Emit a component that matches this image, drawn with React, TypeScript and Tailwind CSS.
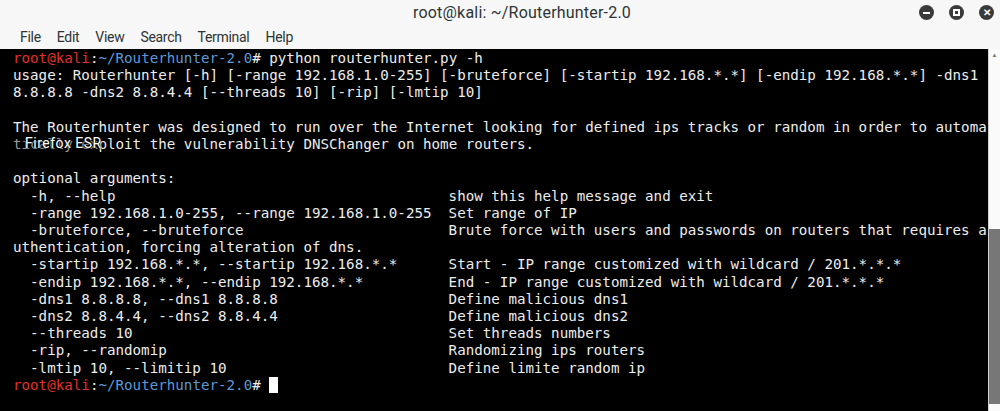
import React from 'react'

const col = (s: string, d: string) => '  ' + s.padEnd(49) + d

const lines: string[] = [
  'usage: Routerhunter [-h] [-range 192.168.1.0-255] [-bruteforce] [-startip 192.168.*.*] [-endip 192.168.*.*] -dns1',
  '8.8.8.8 -dns2 8.8.4.4 [--threads 10] [-rip] [-lmtip 10]',
  '',
  'The Routerhunter was designed to run over the Internet looking for defined ips tracks or random in order to automa',
  'TOOLTIP',
  '',
  'optional arguments:',
  col('-h, --help', 'show this help message and exit'),
  col('-range 192.168.1.0-255, --range 192.168.1.0-255', 'Set range of IP'),
  col('-bruteforce, --bruteforce', 'Brute force with users and passwords on routers that requires a'),
  'uthentication, forcing alteration of dns.',
  col('-startip 192.168.*.*, --startip 192.168.*.*', 'Start - IP range customized with wildcard / 201.*.*.*'),
  col('-endip 192.168.*.*, --endip 192.168.*.*', 'End - IP range customized with wildcard / 201.*.*.*'),
  col('-dns1 8.8.8.8, --dns1 8.8.8.8', 'Define malicious dns1'),
  col('-dns2 8.8.4.4, --dns2 8.8.4.4', 'Define malicious dns2'),
  col('--threads 10', 'Set threads numbers'),
  col('-rip, --randomip', 'Randomizing ips routers'),
  col('-lmtip 10, --limitip 10', 'Define limite random ip'),
]

const Prompt = () => (
  <>
    <span className="text-[#e0302c]">root@kali</span>
    <span>:</span>
    <span className="text-[#5b9ad8]">~/Routerhunter-2.0</span>
    <span>#</span>
  </>
)

const WinButton = ({ children }: { children: React.ReactNode }) => (
  <div className="flex h-[15px] w-[15px] items-center justify-center rounded-full bg-[#3a3a3a]">
    {children}
  </div>
)

export default function App() {
  return (
    <div className="flex h-[411px] w-[1000px] flex-col overflow-hidden bg-white font-['Roboto',sans-serif]">
      {/* Title bar */}
      <div className="relative flex h-[25px] items-center justify-center bg-[#f7f7f7]">
        <span className="pl-[44px] text-[16px] tracking-[0.2px] text-[#2e3436]">root@kali: ~/Routerhunter-2.0</span>
        <div className="absolute right-[6px] top-[5px] flex gap-[15px]">
          <WinButton>
            <div className="h-[2px] w-[7px] bg-white" />
          </WinButton>
          <WinButton>
            <div className="h-[7px] w-[7px] border-2 border-white" />
          </WinButton>
          <WinButton>
            <span className="text-[10px] leading-none font-bold text-white">✕</span>
          </WinButton>
        </div>
      </div>

      {/* Menu bar */}
      <div className="flex h-[24px] items-center gap-[16px] bg-[#f7f7f7] pl-[20px] text-[14px] tracking-[-0.3px] text-[#2e3436]">
        <span>File</span>
        <span>Edit</span>
        <span>View</span>
        <span>Search</span>
        <span>Terminal</span>
        <span>Help</span>
      </div>

      {/* Terminal */}
      <div className="flex min-h-0 flex-1">
        <div className="flex-1 overflow-hidden bg-black pl-[13px] pt-[1px] font-['DejaVu_Sans_Mono',monospace] text-[14.2px] leading-[17.2px] whitespace-pre text-[#ededed]">
          <div>
            <Prompt /> python routerhunter.py -h
          </div>
          {lines.map((l, i) =>
            l === 'TOOLTIP' ? (
              <div key={i} className="relative">
                <span className="text-[#9a9a9a]">tically ex</span>ploit the vulnerability DNSChanger on home routers.
                <span className="absolute left-[12px] top-[-1px] font-['Roboto',sans-serif] text-[14px] tracking-[0.5px] text-white [text-shadow:0_0_2px_#000,0_0_2px_#000]">
                  Firefox ESR
                </span>
              </div>
            ) : (
              <div key={i}>{l || ' '}</div>
            ),
          )}
          <div className="flex items-center">
            <Prompt />
            <span> </span>
            <span className="inline-block h-[16px] w-[8.5px] bg-white" />
          </div>
        </div>

        {/* Scrollbar */}
        <div className="flex w-[12px] flex-col border-l border-[#d0d0d0] bg-[#fafafa]">
          <div className="flex h-[12px] items-center justify-center">
            <span className="text-[6px] leading-none text-[#777]">▲</span>
          </div>
          <div className="h-[168px]" />
          <div className="h-[175px] bg-[#777]" />
        </div>
      </div>
    </div>
  )
}
